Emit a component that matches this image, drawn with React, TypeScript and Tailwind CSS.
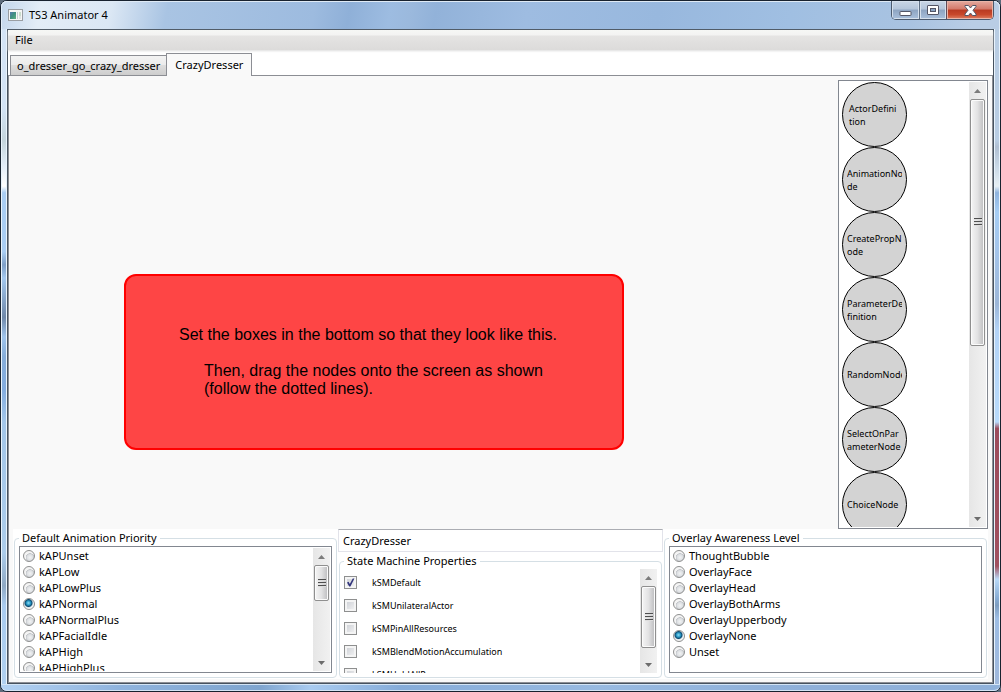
import { useId, useState } from "react";
import type { ReactNode } from "react";

const NODES: { lines: string[]; inset?: boolean }[] = [
  { lines: ["ActorDefini", "tion"], inset: true },
  { lines: ["AnimationNo", "de"] },
  { lines: ["CreatePropN", "ode"] },
  { lines: ["ParameterDe", "finition"] },
  { lines: ["RandomNode"] },
  { lines: ["SelectOnPar", "ameterNode"] },
  { lines: ["ChoiceNode"] },
];

const PRIORITIES = [
  "kAPUnset",
  "kAPLow",
  "kAPLowPlus",
  "kAPNormal",
  "kAPNormalPlus",
  "kAPFacialIdle",
  "kAPHigh",
  "kAPHighPlus",
];

const OVERLAYS = [
  "ThoughtBubble",
  "OverlayFace",
  "OverlayHead",
  "OverlayBothArms",
  "OverlayUpperbody",
  "OverlayNone",
  "Unset",
];

const PROPERTIES = [
  "kSMDefault",
  "kSMUnilateralActor",
  "kSMPinAllResources",
  "kSMBlendMotionAccumulation",
  "kSMHoldAllPoses",
];

function ScrollBar({ thumb }: { thumb: string }) {
  return (
    <div aria-hidden="true" className="flex w-[17px] shrink-0 flex-col bg-gradient-to-r from-[#e6e6e6] to-[#f1f1f1]">
      <div className="flex h-[17px] shrink-0 items-center justify-center">
        <svg width="7" height="4" viewBox="0 0 7 4">
          <path d="M3.5 0L7 4H0Z" fill="#7c7c7c" />
        </svg>
      </div>
      <div className="min-h-0 flex-1 px-px">
        <div
          className={`flex flex-col items-center justify-center gap-px rounded-[2px] border border-[#8f8f8f] bg-gradient-to-r from-[#f5f5f5] via-[#e2e2e3] to-[#bcbcbe] shadow-[inset_0_0_0_1px_#fbfbfb] ${thumb}`}
        >
          <div className="h-0.5 w-2 border-t border-t-[#4f4f4f] border-b border-b-[#dddddd]" />
          <div className="h-0.5 w-2 border-t border-t-[#4f4f4f] border-b border-b-[#dddddd]" />
          <div className="h-0.5 w-2 border-t border-t-[#4f4f4f] border-b border-b-[#dddddd]" />
        </div>
      </div>
      <div className="flex h-[17px] shrink-0 items-center justify-center">
        <svg width="7" height="4" viewBox="0 0 7 4">
          <path d="M0 0H7L3.5 4Z" fill="#6c6c6c" />
        </svg>
      </div>
    </div>
  );
}

function GroupBox({ title, children }: { title: string; children: ReactNode }) {
  return (
    <fieldset className="mx-px min-w-0 rounded-[4px] border border-[#d5dfe5] px-1 pb-1">
      <legend className="px-[3px] leading-4">{title}</legend>
      {children}
    </fieldset>
  );
}

function RadioList({ items, initial, scroll }: { items: string[]; initial: string; scroll?: boolean }) {
  const group = useId();
  const [value, setValue] = useState(initial);
  return (
    <div className="flex h-[127px] border border-[#828790] bg-white p-px">
      <div className="min-w-0 flex-1 overflow-hidden pl-0.5">
        {items.map((item) => (
          <label key={item} className="flex h-4 items-center gap-1 leading-4">
            <input
              type="radio"
              name={group}
              checked={value === item}
              onChange={() => setValue(item)}
              className="size-3 shrink-0 appearance-none rounded-full border border-[#8e8f8f] bg-[radial-gradient(circle_at_60%_65%,#f2f3f4_0,#dcdfe2_3px,#c2c5c9_4px,#f4f4f4_4.5px)] checked:bg-[radial-gradient(circle_at_45%_40%,#8fdcf5_0,#2b9cc8_2px,#0d4a70_3.5px,#d9e3ea_4.5px,#f4f4f4_5px)]"
            />
            {item}
          </label>
        ))}
      </div>
      {scroll && <ScrollBar thumb="h-[40%]" />}
    </div>
  );
}

function PropertyRow({ name, initial }: { name: string; initial: boolean }) {
  const [on, setOn] = useState(initial);
  return (
    <label className="flex h-[23px] items-center gap-[15px] text-[9px]">
      <span className="grid size-[13px] shrink-0">
        <input
          type="checkbox"
          checked={on}
          onChange={() => setOn(!on)}
          className="col-start-1 row-start-1 size-[13px] appearance-none border border-[#8e8f8f] bg-gradient-to-br from-[#c9ccd2] to-[#f6f6f6] shadow-[inset_0_0_0_2px_#f4f4f4]"
        />
        {on && (
          <svg className="pointer-events-none col-start-1 row-start-1" width="13" height="13" viewBox="0 0 13 13">
            <path d="M3 6.6L4.6 5.8L5.8 8L8.8 2.4L10.4 2.6L6.4 10.6H5.2Z" fill="#31347c" />
          </svg>
        )}
      </span>
      {name}
    </label>
  );
}

function TitleBar() {
  return (
    <header className="flex h-7 shrink-0 items-stretch justify-between rounded-t-[6px] bg-[linear-gradient(100deg,#c3d6ec_0,#e3edf7_40px,#dbe7f4_110px,#a9c4e3_165px,#9dbbdf_310px,#8fb0d8_345px,#9dbce1_385px,#9bb9dd_405px,#92b2d9_430px,#9ebce1_520px,#98b8de_650px,#a0bfe2_780px,#a9c3e1_900px,#b9cde5_960px)] pl-[7px] shadow-[inset_0_1px_0_#dfeaf5,inset_1px_0_0_#e3eef9,inset_-1px_0_0_#dfeaf5]">
      <div className="flex items-center gap-1.5">
        <svg width="15" height="12" viewBox="0 0 15 12">
          <rect x="0.5" y="0.5" width="14" height="11" fill="#f6f6f6" stroke="#9a9ea3" />
          <defs>
            <linearGradient id="app-icon-pane" x1="0" y1="0" x2="1" y2="1">
              <stop offset="0" stopColor="#5579b0" />
              <stop offset="0.5" stopColor="#3f9080" />
              <stop offset="1" stopColor="#62b284" />
            </linearGradient>
          </defs>
          <rect x="2" y="3" width="6" height="7" fill="url(#app-icon-pane)" />
          <rect x="9" y="3" width="1" height="7" fill="#c4cdd0" />
          <rect x="11" y="3" width="2" height="4" fill="#c9dccb" />
          <rect x="11" y="7" width="2" height="3" fill="#dfe3e2" />
        </svg>
        <h1 className="leading-4">TS3 Animator 4</h1>
      </div>
      <div className="mr-1.5 flex h-[19px] overflow-hidden rounded-b-[5px] border border-t-0 border-[#4b5a6e]">
        <button
          type="button"
          aria-label="Minimize"
          className="flex w-7 items-center justify-center border-r border-[#5f7085] bg-[linear-gradient(#c9d6e6_0,#b4c5da_45%,#8da4c1_50%,#a9c0dc_100%)] shadow-[inset_0_0_0_1px_#d5e0ec]"
        >
          <svg width="13" height="13" viewBox="0 0 13 13">
            <rect x="1" y="7.5" width="11" height="4" rx="0.5" fill="#fff" stroke="#535666" />
          </svg>
        </button>
        <button
          type="button"
          aria-label="Maximize"
          className="flex w-[27px] items-center justify-center border-r border-[#5f4a58] bg-[linear-gradient(#c9d6e6_0,#b4c5da_45%,#8da4c1_50%,#a9c0dc_100%)] shadow-[inset_0_0_0_1px_#d5e0ec]"
        >
          <svg width="13" height="11" viewBox="0 0 13 11">
            <rect x="0.5" y="0.5" width="11" height="9" rx="0.5" fill="#fff" stroke="#535666" />
            <rect x="3.5" y="3.5" width="5" height="3" fill="#8ba4c4" stroke="#535666" />
          </svg>
        </button>
        <button
          type="button"
          aria-label="Close"
          className="flex w-[46px] items-center justify-center bg-[linear-gradient(#e5aa9f_0,#d3796a_45%,#b93a22_50%,#c8482b_75%,#de8063_100%)] shadow-[inset_0_0_0_1px_#e9b5a8]"
        >
          <svg width="13" height="11" viewBox="0 0 13 11">
            <path
              d="M1 0.5H4.5L6.5 3L8.5 0.5H12V1.5L9 5.3L12 9V10.5H8.5L6.5 8L4.5 10.5H1V9L4 5.3L1 1.5Z"
              fill="#fff"
              stroke="#535666"
            />
          </svg>
        </button>
      </div>
    </header>
  );
}

export default function App() {
  const [machine, setMachine] = useState("CrazyDresser");
  return (
    <div className="h-screen bg-[#5d6b7c] font-['Noto_Sans',sans-serif] text-[11px] text-black">
      <div className="flex h-full flex-col rounded-[7px] border border-[#18222f] bg-[#a5c3e6]">
        <TitleBar />
        <div className="flex min-h-0 flex-1">
          <div className="w-1.5 shrink-0 border-x border-[#e9f3fc] bg-[linear-gradient(#d3e3f5_0,#d3e3f5_12%,#c4d4dc_17%,#e3edf8_21%,#ffffff_24%,#a9cdf3_25%,#a9cdf3_34%,#7f9fc7_36%,#a3c8ef_38%,#6f88a9_44%,#9fc4ec_47%,#86add9_50%,#83acdf_55%,#a3c6e9_60%,#acccea_80%,#8fa9c4_85%,#a9cbef_88%,#b0d0f0_100%)]" />
          <div className="flex min-w-0 flex-1 flex-col border border-[#46525f] bg-white">
            <nav className="flex h-5 shrink-0 items-center bg-[linear-gradient(#f6f7f5_0,#f3f3f2_5px,#e5e4e3_6px,#dcdbda_100%)] pl-[7px] shadow-[0_1px_2px_#dddddd]">
              <button type="button" className="leading-4">
                File
              </button>
            </nav>
            <div role="tablist" className="flex h-[25px] shrink-0 items-end pl-0.5">
              <button
                type="button"
                role="tab"
                aria-selected="false"
                className="h-5 border border-r-0 border-b-0 border-[#8c8e94] bg-[linear-gradient(#f3f3f3_0,#ebebeb_50%,#dddddd_50%,#cdcdcd_100%)] px-1.5 leading-4"
              >
                o_dresser_go_crazy_dresser
              </button>
              <button
                type="button"
                role="tab"
                aria-selected="true"
                className="relative -mb-px h-[23px] border border-b-0 border-[#8c8e94] bg-[#f9f9f9] px-2 leading-4"
              >
                CrazyDresser
              </button>
            </div>
            <main className="flex min-h-0 flex-1 flex-col border border-[#8c8e94] bg-[#f9f9f9]">
              <div className="flex min-h-0 flex-1">
                <section aria-label="Canvas" className="relative min-w-0 flex-1">
                  <div className="absolute top-[198px] left-[115px] h-44 w-[500px] rounded-xl border-2 border-[#ff0000] bg-[#fe4545] pt-[50px] pl-[53px] font-['Liberation_Sans',sans-serif] text-base leading-[18px]">
                    <p>Set the boxes in the bottom so that they look like this.</p>
                    <p className="mt-[18px] pl-[25px]">
                      Then, drag the nodes onto the screen as shown
                      <br />
                      (follow the dotted lines).
                    </p>
                  </div>
                </section>
                <aside className="mt-1 mr-1 flex w-[150px] shrink-0 border border-[#828790] bg-white p-px">
                  <ul className="min-h-0 flex-1 overflow-hidden pl-0.5">
                    {NODES.map(({ lines, inset }) => (
                      <li
                        key={lines.join("")}
                        className="flex size-[65px] items-center rounded-full border border-black bg-[#d3d3d3] pr-1 pl-1 text-[9px] leading-[13px]"
                      >
                        <div className={inset ? "w-full overflow-hidden pl-0.5" : "w-full overflow-hidden"}>
                          {lines.map((line) => (
                            <span key={line} className="block whitespace-nowrap">
                              {line}
                            </span>
                          ))}
                        </div>
                      </li>
                    ))}
                  </ul>
                  <ScrollBar thumb="h-[60%]" />
                </aside>
              </div>
              <form className="mx-1 mb-[3px] grid shrink-0 grid-cols-3 bg-white pb-px">
                <div className="min-w-0 pt-px">
                  <GroupBox title="Default Animation Priority">
                    <RadioList items={PRIORITIES} initial="kAPNormal" scroll />
                  </GroupBox>
                </div>
                <div className="flex min-w-0 flex-col gap-px">
                  <input
                    type="text"
                    aria-label="State machine name"
                    value={machine}
                    onChange={(e) => setMachine(e.target.value)}
                    className="h-[23px] w-full border border-[#e2e3ea] border-t-[#abadb3] bg-white px-1"
                  />
                  <GroupBox title="State Machine Properties">
                    <div className="flex h-[104px]">
                      <div className="min-w-0 flex-1 overflow-hidden pt-0.5">
                        {PROPERTIES.map((name) => (
                          <PropertyRow key={name} name={name} initial={name === "kSMDefault"} />
                        ))}
                      </div>
                      <ScrollBar thumb="h-[88%]" />
                    </div>
                  </GroupBox>
                </div>
                <div className="min-w-0 pt-px">
                  <GroupBox title="Overlay Awareness Level">
                    <RadioList items={OVERLAYS} initial="OverlayNone" />
                  </GroupBox>
                </div>
              </form>
            </main>
          </div>
          <div className="w-1.5 shrink-0 border-x border-[#e9f3fc] bg-[linear-gradient(#b9cde3_0,#b9cde3_17%,#b0bfd2_18%,#c9d8e6_21%,#e6eef3_24%,#8fb3de_25%,#a6cdf4_28%,#a4c4ea_34%,#9cb6d8_42%,#b3d3f7_46%,#b8dafb_60%,#9c4c5c_61%,#a0505f_82%,#b9d9f7_84%,#86abd3_87%,#7d9dc0_88%,#9dbde4_90%,#9fb8dc_100%)]" />
        </div>
        <footer className="h-[7px] shrink-0 rounded-b-[6px] border-y border-[#d3e4f5] bg-[linear-gradient(90deg,#b3d2f3_0,#8fb3dd_12%,#7fa5cf_26%,#a9cbf0_31%,#86acd9_40%,#98bae1_60%,#8fb0d9_80%,#8fb1da_100%)]" />
      </div>
    </div>
  );
}
